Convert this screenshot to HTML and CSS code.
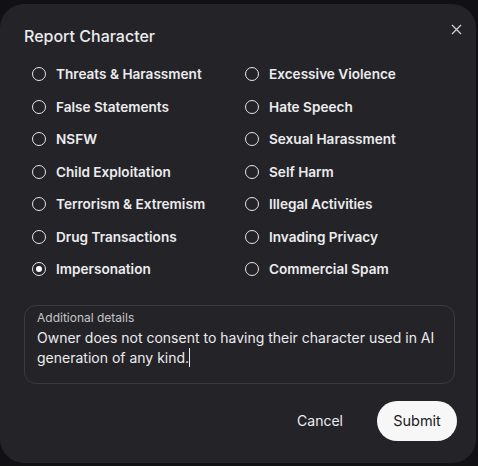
FILE: index.html
```html
<!DOCTYPE html>
<html lang="en">
<head>
    <meta charset="UTF-8">
    <meta name="viewport" content="width=device-width, initial-scale=1.0">
    <title>Report Character</title>
    <link rel="stylesheet" href="styles.css">
</head>
<body>
    <div class="dialog">
        <div class="dialog-header">
            <h2>Report Character</h2>
            <button class="close-btn" aria-label="Close">
                <svg width="11" height="11" viewBox="0 0 11 11"><path d="M1 1L10 10M10 1L1 10" stroke="#cfcfd2" stroke-width="1.3" fill="none"/></svg>
            </button>
        </div>
        <div class="reasons">
            <label class="reason"><span class="radio"></span>Threats &amp; Harassment</label>
            <label class="reason"><span class="radio"></span>Excessive Violence</label>
            <label class="reason"><span class="radio"></span>False Statements</label>
            <label class="reason"><span class="radio"></span>Hate Speech</label>
            <label class="reason"><span class="radio"></span>NSFW</label>
            <label class="reason"><span class="radio"></span>Sexual Harassment</label>
            <label class="reason"><span class="radio"></span>Child Exploitation</label>
            <label class="reason"><span class="radio"></span>Self Harm</label>
            <label class="reason"><span class="radio"></span>Terrorism &amp; Extremism</label>
            <label class="reason"><span class="radio"></span>Illegal Activities</label>
            <label class="reason"><span class="radio"></span>Drug Transactions</label>
            <label class="reason"><span class="radio"></span>Invading Privacy</label>
            <label class="reason"><span class="radio checked"></span>Impersonation</label>
            <label class="reason"><span class="radio"></span>Commercial Spam</label>
        </div>
        <div class="details">
            <div class="details-label">Additional details</div>
            <div class="details-text">Owner does not consent to having their character used in AI generation of any kind.<span class="caret"></span></div>
        </div>
        <div class="actions">
            <button class="cancel-btn">Cancel</button>
            <button class="submit-btn">Submit</button>
        </div>
    </div>
</body>
</html>
```
FILE: styles.css
```css
body {
    margin: 0;
    background: #111113;
    font-family: Inter, "Noto Sans", sans-serif;
    color: #f2f2f3;
}

.dialog {
    width: 476px;
    height: 459px;
    margin-top: 4px;
    box-sizing: border-box;
    background: #242428;
    border-radius: 24px;
    padding: 21px 20px 0 24px;
}

.dialog-header {
    display: flex;
    justify-content: space-between;
    align-items: flex-start;
    height: 33px;
}

h2 {
    margin: 0;
    font-size: 16px;
    font-weight: 500;
    line-height: 22px;
    color: #ececee;
}

.close-btn {
    background: none;
    border: none;
    padding: 0;
    margin: -2px -6px 0 0;
    cursor: pointer;
}

.reasons {
    display: grid;
    grid-template-columns: 213px 1fr;
    grid-auto-rows: 32.5px;
    padding-left: 8px;
}

.reason {
    display: flex;
    align-items: center;
    gap: 10px;
    font-size: 13.6px;
    font-weight: 600;
    color: #ececee;
}

.radio {
    width: 14px;
    height: 14px;
    box-sizing: border-box;
    border: 1.5px solid #e6e6e8;
    border-radius: 50%;
    position: relative;
    flex-shrink: 0;
}

.radio.checked::after {
    content: "";
    position: absolute;
    left: 2.5px;
    top: 2.5px;
    width: 6px;
    height: 6px;
    border-radius: 50%;
    background: #ffffff;
}

.details {
    margin-top: 19px;
    width: 431px;
    height: 79px;
    box-sizing: border-box;
    border: 1px solid #3a3a3f;
    border-radius: 12px;
    padding: 4px 6px 4px 12px;
}

.details-label {
    font-size: 12px;
    color: #c4c4c8;
    line-height: 15px;
}

.details-text {
    margin-top: 3px;
    font-size: 14px;
    line-height: 20px;
    color: #ececee;
}

.caret {
    display: inline-block;
    width: 1px;
    height: 19px;
    background: #ececee;
    vertical-align: -4px;
}

.actions {
    display: flex;
    justify-content: flex-end;
    align-items: center;
    gap: 12px;
    margin-top: 17px;
    margin-right: -1px;
}

.cancel-btn {
    background: none;
    border: none;
    color: #ececee;
    font-family: inherit;
    font-size: 14px;
    padding: 10px 22px;
    cursor: pointer;
}

.submit-btn {
    background: #f7f7f7;
    color: #1b1b1e;
    border: none;
    border-radius: 20px;
    font-family: inherit;
    font-size: 14.5px;
    width: 80px;
    height: 40px;
    cursor: pointer;
}
```
